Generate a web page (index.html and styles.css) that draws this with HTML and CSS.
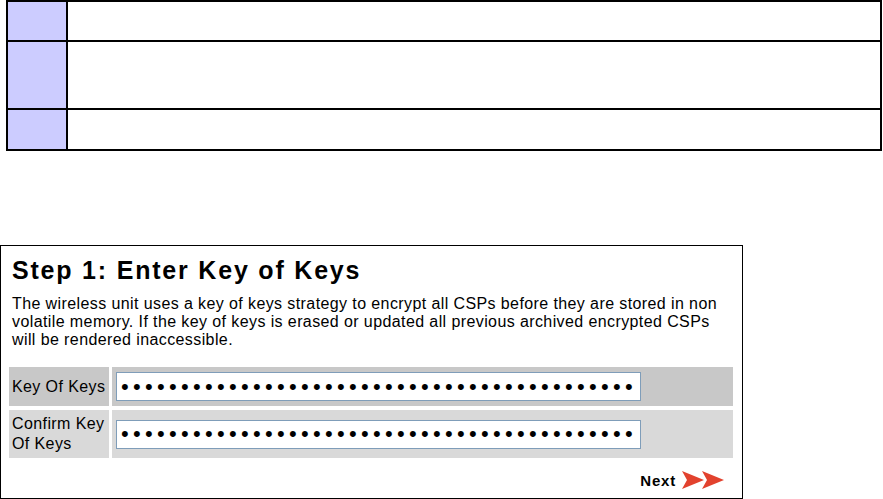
FILE: index.html
```html
<!DOCTYPE html>
<html lang="en">
<head>
  <meta charset="UTF-8">
  <title>Enter Key of Keys</title>
  <link rel="stylesheet" href="styles.css">
</head>
<body>
  <table class="grid-table">
    <tr class="row-a"><td class="mark"></td><td></td></tr>
    <tr class="row-b"><td class="mark"></td><td></td></tr>
    <tr class="row-c"><td class="mark"></td><td></td></tr>
  </table>

  <div class="panel">
    <h1>Step 1: Enter Key of Keys</h1>
    <p class="intro">The wireless unit uses a key of keys strategy to encrypt all CSPs before they are stored in non volatile memory. If the key of keys is erased or updated all previous archived encrypted CSPs will be rendered inaccessible.</p>

    <div class="form-grid">
      <div class="label dark">Key Of Keys</div>
      <div class="field dark"><input type="password" value="abcdefghijabcdefghijabcdefghijabcdefghijabc"></div>
      <div class="label light">Confirm Key Of Keys</div>
      <div class="field light"><input type="password" value="abcdefghijabcdefghijabcdefghijabcdefghijabc"></div>
    </div>

    <div class="actions">
      <span class="next">Next</span>
      <svg class="arrows" width="44" height="18" viewBox="0 0 44 18">
        <polygon points="0,0 22,9 0,18 5,9" fill="#e2422e"/>
        <polygon points="20,0 42,9 20,18 25,9" fill="#e2422e"/>
      </svg>
    </div>
  </div>
</body>
</html>
```

FILE: styles.css
```css
/* page */
body {
  margin: 0;
  background: #ffffff;
  font-family: "Liberation Sans", Arial, sans-serif;
  color: #000;
}

/* top empty table */
.grid-table {
  border-collapse: collapse;
  margin-left: 6px;
  width: 876px;
}
.grid-table td {
  border: 2px solid #000;
  padding: 0;
}
.grid-table .mark {
  width: 58px;
  background: #ccccff;
}
.row-a td { height: 38px; }
.row-b td { height: 66px; }
.row-c td { height: 39px; }

/* step panel */
.panel {
  margin-top: 94px;
  border: 1px solid #000;
  box-sizing: border-box;
  width: 743px;
  height: 254px;
  padding: 9px 9px 0 8px;
}
.panel h1 {
  margin: 0 0 0 3px;
  font-size: 25px;
  letter-spacing: 1.8px;
  line-height: 30px;
  font-weight: bold;
}
.intro {
  margin: 10px 0 18px 3px;
  font-size: 16px;
  letter-spacing: 0.4px;
  line-height: 18px;
}

/* form rows */
.form-grid {
  display: grid;
  grid-template-columns: 100px 1fr;
  column-gap: 3px;
  row-gap: 4px;
}
.label {
  padding: 0 3px;
  font-size: 16px;
  letter-spacing: 0.4px;
  line-height: 20px;
  display: flex;
  align-items: center;
}
.dark { background: #c8c8c8; height: 39px; }
.light { background: #d9d9d9; height: 48px; }
.field {
  display: flex;
  align-items: center;
  padding-left: 4px;
}
.field input {
  width: 525px;
  height: 29px;
  box-sizing: border-box;
  border: 1px solid #7f9db9;
  background: #fff;
  padding: 0 4px;
  font-family: "Liberation Sans", Arial, sans-serif;
  font-size: 22px;
  letter-spacing: 4.3px;
  outline: none;
}

/* footer */
.actions {
  display: flex;
  justify-content: flex-end;
  align-items: center;
  gap: 6px;
  margin-top: 13px;
  padding-right: 7px;
}
.next {
  font-size: 15px;
  font-weight: bold;
  letter-spacing: 0.8px;
}
```
